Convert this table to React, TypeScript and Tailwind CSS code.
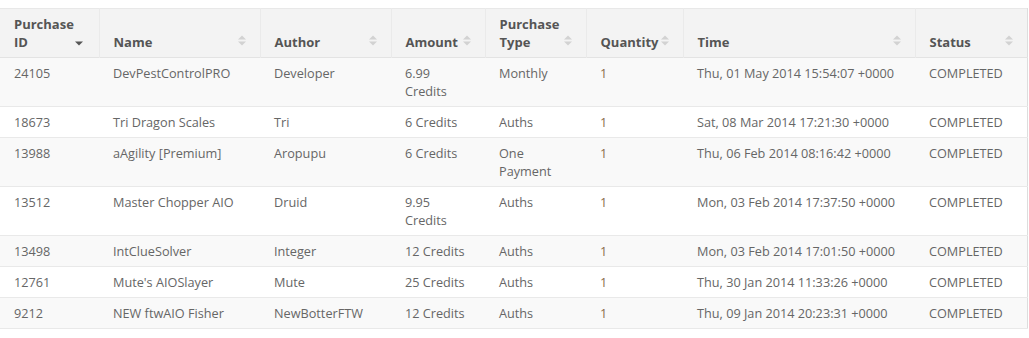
import React from "react";

type Row = {
  id: string;
  name: string;
  author: string;
  amount: string;
  type: string;
  qty: string;
  time: string;
  status: string;
};

const rows: Row[] = [
  { id: "24105", name: "DevPestControlPRO", author: "Developer", amount: "6.99 Credits", type: "Monthly", qty: "1", time: "Thu, 01 May 2014 15:54:07 +0000", status: "COMPLETED" },
  { id: "18673", name: "Tri Dragon Scales", author: "Tri", amount: "6 Credits", type: "Auths", qty: "1", time: "Sat, 08 Mar 2014 17:21:30 +0000", status: "COMPLETED" },
  { id: "13988", name: "aAgility [Premium]", author: "Aropupu", amount: "6 Credits", type: "One Payment", qty: "1", time: "Thu, 06 Feb 2014 08:16:42 +0000", status: "COMPLETED" },
  { id: "13512", name: "Master Chopper AIO", author: "Druid", amount: "9.95 Credits", type: "Auths", qty: "1", time: "Mon, 03 Feb 2014 17:37:50 +0000", status: "COMPLETED" },
  { id: "13498", name: "IntClueSolver", author: "Integer", amount: "12 Credits", type: "Auths", qty: "1", time: "Mon, 03 Feb 2014 17:01:50 +0000", status: "COMPLETED" },
  { id: "12761", name: "Mute's AIOSlayer", author: "Mute", amount: "25 Credits", type: "Auths", qty: "1", time: "Thu, 30 Jan 2014 11:33:26 +0000", status: "COMPLETED" },
  { id: "9212", name: "NEW ftwAIO Fisher", author: "NewBotterFTW", amount: "12 Credits", type: "Auths", qty: "1", time: "Thu, 09 Jan 2014 20:23:31 +0000", status: "COMPLETED" },
];

function SortBoth() {
  return (
    <svg width="8" height="11" viewBox="0 0 8 11" className="absolute right-[14px] bottom-[11px]">
      <path d="M0 4.5 L4 0.5 L8 4.5 Z" fill="#d2d2d2" />
      <path d="M0 6.5 L4 10.5 L8 6.5 Z" fill="#d2d2d2" />
    </svg>
  );
}

function SortDesc() {
  return (
    <svg width="8" height="11" viewBox="0 0 8 11" className="absolute right-[16px] bottom-[11px]">
      <path d="M0 6.5 L4 10.5 L8 6.5 Z" fill="#555555" />
    </svg>
  );
}

const headers: { label: React.ReactNode; desc?: boolean }[] = [
  { label: <>Purchase<br />ID</>, desc: true },
  { label: "Name" },
  { label: "Author" },
  { label: "Amount" },
  { label: <>Purchase<br />Type</> },
  { label: "Quantity" },
  { label: "Time" },
  { label: "Status" },
];

const widths = [99, 161, 131, 94, 101, 97, 232, 112];

export default function App() {
  return (
    <div
      className="w-[1029px] h-[338px] bg-white pt-[8px] overflow-hidden"
      style={{ fontFamily: '"Open Sans", "Liberation Sans", sans-serif' }}
    >
      <table className="table-fixed border-collapse w-[1027px] border-t border-t-[#e8e8e8] border-r border-r-[#dddddd]">
        <colgroup>
          {widths.map((w, i) => (
            <col key={i} style={{ width: w }} />
          ))}
        </colgroup>
        <thead>
          <tr className="bg-[#f3f3f3] border-b border-b-[#e3e3e3]">
            {headers.map((h, i) => (
              <th
                key={i}
                className={`relative align-bottom text-left font-bold text-[13px] leading-[18px] text-[#555555] pt-[6px] pb-[6px] pl-[14px] pr-[20px] ${i > 0 ? "border-l border-l-[#eaeaea]" : ""}`}
              >
                {h.label}
                {h.desc ? <SortDesc /> : <SortBoth />}
              </th>
            ))}
          </tr>
        </thead>
        <tbody>
          {rows.map((r, ri) => (
            <tr
              key={r.id}
              className={`${ri % 2 === 0 ? "bg-[#f9f9f9]" : "bg-white"} border-b border-b-[#e9e9e9] text-[12.7px] leading-[18px] text-[#666666] align-top`}
            >
              <td className="px-[14px] py-[6px]">{r.id}</td>
              <td className="px-[14px] py-[6px]">{r.name}</td>
              <td className="px-[14px] py-[6px]">{r.author}</td>
              <td className="px-[14px] py-[6px]">{r.amount}</td>
              <td className="px-[14px] py-[6px]">{r.type}</td>
              <td className="px-[14px] py-[6px] text-[#8b6b4b]">{r.qty}</td>
              <td className="px-[14px] py-[6px]">{r.time}</td>
              <td className="px-[14px] py-[6px]">{r.status}</td>
            </tr>
          ))}
        </tbody>
      </table>
    </div>
  );
}
